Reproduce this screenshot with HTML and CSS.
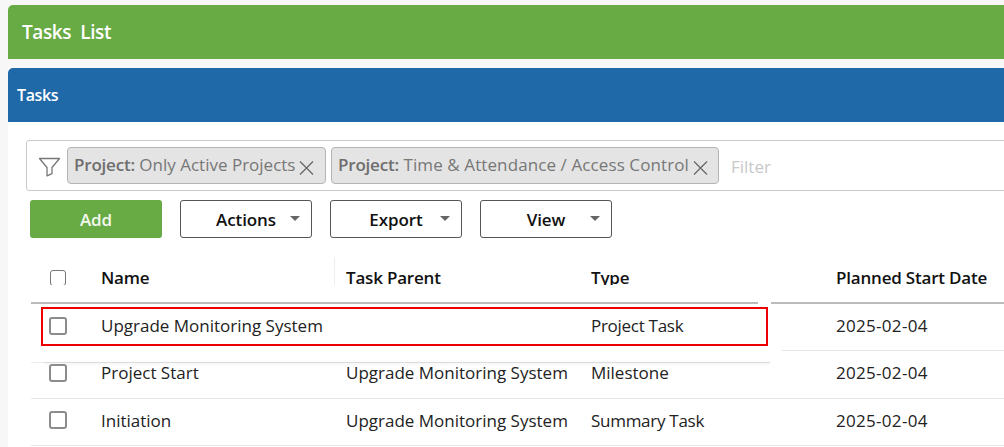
FILE: index.html
```html
<!DOCTYPE html>
<html lang="en">
<head>
<meta charset="utf-8">
<title>Tasks List</title>
<link rel="stylesheet" href="styles.css">
</head>
<body>
<div class="page">
  <header class="title-bar">Tasks&nbsp; List</header>
  <section class="panel">
    <div class="panel-head">Tasks</div>
    <div class="panel-body">
      <div class="filter-box">
        <svg class="funnel" width="24" height="20" viewBox="0 0 24 20" aria-hidden="true"><path d="M1.5 1.500h20L14 10.500v6.200l-5 2.200v-8.400z" fill="none" stroke="#777" stroke-width="1.300" stroke-linejoin="round"/></svg>
        <span class="chip chip-first"><b>Project:</b> Only Active Projects<svg class="x" width="15" height="15" viewBox="0 0 15 15" aria-hidden="true"><path d="M1 1.500l13 13M14 1.500l-13 13" stroke="#666" stroke-width="1.200" fill="none"/></svg></span>
        <span class="chip chip-second"><b>Project:</b> Time &amp; Attendance / Access Control<svg class="x" width="15" height="15" viewBox="0 0 15 15" aria-hidden="true"><path d="M1 1.500l13 13M14 1.500l-13 13" stroke="#666" stroke-width="1.200" fill="none"/></svg></span>
        <span class="filter-ph">Filter</span>
      </div>
      <div class="toolbar">
        <button class="btn btn-add">Add</button>
        <button class="btn btn-menu">Actions<i class="caret"></i></button>
        <button class="btn btn-menu">Export<i class="caret"></i></button>
        <button class="btn btn-menu">View<i class="caret"></i></button>
      </div>
      <div class="table">
        <div class="row head">
          <span class="cell"><i class="check"></i></span>
          <span class="cell">Name</span>
          <span class="cell sep">Task Parent</span>
          <span class="cell">Type</span>
          <span class="cell">Planned Start Date</span>
        </div>
        <div class="head-gap"></div>
        <div class="row first">
          <span class="cell"><i class="check"></i></span>
          <span class="cell">Upgrade Monitoring System</span>
          <span class="cell"></span>
          <span class="cell type">Project Task</span>
          <span class="cell date">2025-02-04</span>
        </div>
        <div class="row second">
          <span class="cell"><i class="check"></i></span>
          <span class="cell">Project Start</span>
          <span class="cell">Upgrade Monitoring System</span>
          <span class="cell">Milestone</span>
          <span class="cell date">2025-02-04</span>
        </div>
        <div class="row third">
          <span class="cell"><i class="check"></i></span>
          <span class="cell">Initiation</span>
          <span class="cell">Upgrade Monitoring System</span>
          <span class="cell type">Summary Task</span>
          <span class="cell date">2025-02-04</span>
        </div>
        <div class="patch"></div>
        <div class="highlight"></div>
      </div>
    </div>
  </section>
</div>
</body>
</html>
```
FILE: styles.css
```css
html, body {
  margin: 0;
  height: 447px;
  overflow: hidden;
  background: #f7f7f7;
}
.page {
  width: 1100px;
  padding: 5px 0 0 8px;
  font-family: "Open Sans", "Noto Sans", sans-serif;
  font-size: 17px;
  color: #1a1a1a;
}
.title-bar {
  height: 54px;
  line-height: 54px;
  padding-left: 14px;
  background: #68ab44;
  color: #fff;
  font-size: 19px;
  font-weight: 600;
  border-radius: 5px 5px 0 0;
  letter-spacing: -0.4px;
}
.panel {
  margin-top: 9px;
  background: #fff;
  height: 400px;
}
.panel-head {
  height: 54px;
  line-height: 54px;
  padding-left: 9px;
  background: #1f69a8;
  color: #fff;
  font-size: 16px;
  font-weight: 600;
  border-radius: 5px 5px 0 0;
  letter-spacing: -0.4px;
}
.panel-body {
  padding: 18px 0 0 18px;
}
.filter-box {
  height: 51px;
  display: flex;
  align-items: center;
  gap: 5px;
  box-sizing: border-box;
  border: 1px solid #c9c9c9;
  border-radius: 3px;
  padding-left: 11px;
}
.funnel {
  flex: none;
  margin-top: 3px;
}
.chip {
  flex: none;
  display: flex;
  align-items: center;
  height: 37px;
  box-sizing: border-box;
  padding: 0 0 2px 6px;
  background: #e4e4e4;
  border: 1px solid #b4b4b4;
  border-radius: 4px;
  color: #777;
  white-space: pre;
  font-size: 17px;
}
.chip b {
  font-weight: 600;
  color: #6e6e6e;
  letter-spacing: -0.2px;
}
.chip-first { width: 259px; }
.chip-second { width: 388px; letter-spacing: 0.1px; }
.x {
  margin: 5px 0 0 4px;
  flex: none;
}
.filter-ph {
  margin-left: 7px;
  margin-top: 2px;
  color: #c8c8c8;
}
.toolbar {
  display: flex;
  gap: 18px;
  margin: 9px 0 0 4px;
}
.btn {
  font: inherit;
  width: 132px;
  height: 38px;
  box-sizing: border-box;
  border-radius: 3px;
  font-weight: 600;
  position: relative;
  padding: 0;
  letter-spacing: -0.1px;
}
.btn-add {
  background: #68ab44;
  border: 0;
  color: #f4f8f0;
}
.btn-menu {
  background: #fff;
  border: 1px solid #555;
  color: #111;
}
.caret {
  position: absolute;
  right: 11px;
  top: 15px;
  border-style: solid;
  border-width: 5px 5px 0;
  border-color: #666 transparent transparent;
}
.table {
  position: relative;
  margin: 18px 0 0 5px;
}
.row {
  display: grid;
  grid-template-columns: 70px 245px 245px 245px 1fr;
  align-items: center;
  height: 47px;
  box-sizing: border-box;
  border-bottom: 1px solid #e6e6e6;
  color: #222;
}
.cell {
  position: relative;
  z-index: 2;
  white-space: nowrap;
}
.type { letter-spacing: -0.28px; }
.date { letter-spacing: 0.3px; }
.head {
  height: 29px;
  margin-bottom: 17px;
  overflow: hidden;
  align-items: start;
  border-bottom: 0;
  font-weight: 600;
  color: #111;
  letter-spacing: -0.2px;
  padding-top: 10px;
}
.sep::before {
  content: "";
  position: absolute;
  left: -12px;
  top: -9px;
  height: 29px;
  width: 1px;
  background: #eee;
}
.head-gap {
  height: 2px;
  background: linear-gradient(to right, #bbb 727px, transparent 727px, transparent 740px, #bbb 740px);
}
.first { padding-bottom: 3px; }
.second { height: 48px; padding-bottom: 4px; }
.third { padding-bottom: 4px; }
.check {
  display: block;
  width: 14px;
  height: 14px;
  margin-left: 18px;
  border: 2px solid #8c8c8c;
  border-radius: 3px;
  background: #fff;
}
.head .check {
  margin-left: 19px;
  margin-top: 4px;
  border-width: 1px;
  border-color: #777;
}
.patch {
  position: absolute;
  z-index: 1;
  left: 0;
  top: 48px;
  width: 751px;
  height: 59px;
  background: #fff;
}
.patch::before {
  content: "";
  position: absolute;
  left: 13px;
  bottom: 0;
  width: 726px;
  height: 1px;
  background: #dcdcdc;
  box-shadow: 0 1px 3px rgba(0, 0, 0, 0.1);
}
.patch::after {
  content: "";
  position: absolute;
  left: 0;
  bottom: 0;
  width: 13px;
  height: 1px;
  background: #ececec;
}
.highlight {
  position: absolute;
  z-index: 3;
  left: 10px;
  top: 51px;
  width: 727px;
  height: 39px;
  box-sizing: border-box;
  border: 2px solid #ee0000;
}
```
